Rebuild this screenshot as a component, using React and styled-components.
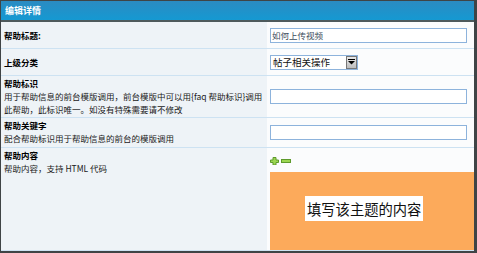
import React from 'react';
import styled, { createGlobalStyle } from 'styled-components';

const Global = createGlobalStyle`
    html, body { margin: 0; padding: 0; background: #fff; }
    body { font-family: "Noto Sans CJK SC", "Liberation Sans", sans-serif; }
`;

const Frame = styled.div`
    width: 477px;
    height: 253px;
    box-sizing: border-box;
    border-style: solid;
    border-color: #3f4446;
    border-width: 1px 3px 2px 1px;
    display: flex;
    flex-direction: column;
    overflow: hidden;
    background: #fbfcfd;
`;

const Header = styled.div`
    height: 19px;
    line-height: 19px;
    padding-left: 4px;
    background: linear-gradient(to bottom, #2b8bc2, #1599d2);
    border-bottom: 2px solid #4e5a5c;
    color: #fff;
    font-size: 9px;
    font-weight: bold;
`;

const Row = styled.div`
    display: grid;
    grid-template-columns: 266px 1fr;
    border-bottom: 1px solid #cde2f2;
    height: ${p => p.$h}px;
    flex: ${p => (p.$fill ? 1 : 'none')};
`;

const Label = styled.div`
    background: #eef3f7;
    padding: 1px 3px;
    display: flex;
    flex-direction: column;
    justify-content: ${p => (p.$center ? 'center' : 'flex-start')};
    font-size: 8.5px;
    line-height: 13px;
    color: #111;
`;

const Title = styled.div`
    font-weight: bold;
    color: #000;
`;

const Desc = styled.div`
    color: #1a1a1a;
`;

const Field = styled.div`
    padding-left: 3px;
    display: flex;
    flex-direction: column;
    justify-content: ${p => (p.$top ? 'flex-start' : 'center')};
`;

const TextInput = styled.div`
    width: 197px;
    height: 15px;
    box-sizing: border-box;
    border: 1px solid #8db3dc;
    background: #fff;
    font-size: 8.5px;
    line-height: 13px;
    padding-left: 1px;
    color: #3a4a5a;
`;

const Select = styled.div`
    width: 88px;
    height: 15px;
    box-sizing: border-box;
    border: 1px solid #8db3dc;
    background: #fff;
    display: flex;
    align-items: center;
    font-size: 9.5px;
    color: #111;
    padding-left: 2px;
`;

const SelectText = styled.span`
    flex: 1;
`;

const SelectButton = styled.div`
    width: 11px;
    height: 13px;
    box-sizing: border-box;
    background: linear-gradient(#e8e8e8, #bdbdbd);
    border: 1px solid #777;
    display: flex;
    align-items: center;
    justify-content: center;
`;

const Tools = styled.div`
    display: flex;
    gap: 2px;
    margin-top: 9px;
    height: 8px;
`;

const Editor = styled.div`
    margin-top: 7px;
    flex: 1;
    background: #fcaa5b;
    padding: 24px 0 0 35px;
`;

const Note = styled.div`
    display: inline-block;
    background: #fff;
    font-size: 14.3px;
    line-height: 25px;
    padding: 0 2px;
    color: #111;
`;

const Plus = () => (
    <svg width="9" height="8" viewBox="0 0 9 8">
        <path d="M3 0.5h3v2.5h2.5v2.5h-2.5v2.5h-3v-2.5h-2.5v-2.5h2.5z" fill="#9bd651" stroke="#5e9a2c" strokeWidth="1" />
    </svg>
);

const Minus = () => (
    <svg width="10" height="8" viewBox="0 0 10 8">
        <rect x="0.5" y="2.5" width="9" height="3" fill="#9bd651" stroke="#5e9a2c" strokeWidth="1" />
    </svg>
);

export default function App() {
    return (
        <>
            <Global />
            <Frame>
                <Header>编辑详情</Header>
                <Row $h={26}>
                    <Label $center><Title>帮助标题:</Title></Label>
                    <Field><TextInput>如何上传视频</TextInput></Field>
                </Row>
                <Row $h={26}>
                    <Label $center><Title>上级分类</Title></Label>
                    <Field>
                        <Select>
                            <SelectText>帖子相关操作</SelectText>
                            <SelectButton>
                                <svg width="7" height="6" viewBox="0 0 7 6">
                                    <rect x="0" y="0" width="7" height="1" fill="#000" />
                                    <path d="M0 2h7l-3.5 3.5z" fill="#000" />
                                </svg>
                            </SelectButton>
                        </Select>
                    </Field>
                </Row>
                <Row $h={41}>
                    <Label>
                        <Title>帮助标识</Title>
                        <Desc>
                            用于帮助信息的前台模版调用，前台模版中可以用{'{faq 帮助标识}'}调用<br />
                            此帮助，此标识唯一。如没有特殊需要请不修改
                        </Desc>
                    </Label>
                    <Field><TextInput /></Field>
                </Row>
                <Row $h={29}>
                    <Label>
                        <Title>帮助关键字</Title>
                        <Desc>配合帮助标识用于帮助信息的前台的模版调用</Desc>
                    </Label>
                    <Field><TextInput /></Field>
                </Row>
                <Row $fill>
                    <Label>
                        <Title>帮助内容</Title>
                        <Desc>帮助内容，支持 HTML 代码</Desc>
                    </Label>
                    <Field $top>
                        <Tools><Plus /><Minus /></Tools>
                        <Editor><Note>填写该主题的内容</Note></Editor>
                    </Field>
                </Row>
            </Frame>
        </>
    );
}
